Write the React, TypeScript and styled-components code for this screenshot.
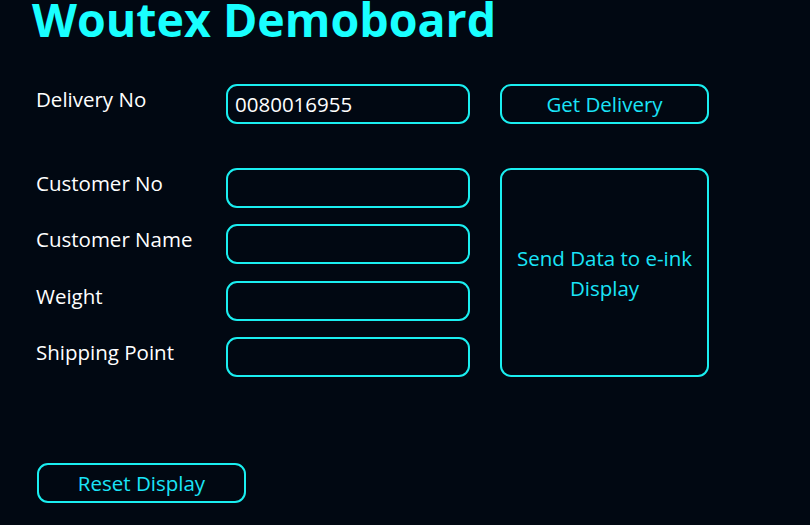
import React from 'react';
import styled, { createGlobalStyle } from 'styled-components';

const GlobalStyle = createGlobalStyle`
  html, body {
    margin: 0;
    padding: 0;
    background: #010812;
  }
  body {
    font-family: "Open Sans", "Noto Sans", sans-serif;
  }
`;

const Page = styled.div`
  width: 810px;
  height: 525px;
  background: #010812;
  padding: 0 0 0 36px;
  box-sizing: border-box;
  overflow: hidden;
`;

const Title = styled.h1`
  margin: 0 0 0 -4px;
  height: 84px;
  font-size: 46.5px;
  line-height: 38px;
  font-weight: 700;
  color: #19ffff;
  white-space: nowrap;
`;

const Form = styled.div`
  display: grid;
  grid-template-columns: 160px 244px 209px;
  column-gap: 30px;
`;

const Label = styled.div`
  color: #ffffff;
  font-size: 20.5px;
  line-height: 26px;
  padding-top: 2px;
  white-space: nowrap;
`;

const Field = styled.input`
  width: 244px;
  height: 40px;
  box-sizing: border-box;
  border: 2px solid #1aeef0;
  border-radius: 11px;
  background: transparent;
  color: #ffffff;
  font-family: inherit;
  font-size: 20.5px;
  padding: 0 7px;
  outline: none;
`;

const Button = styled.button<{ $tall?: boolean }>`
  width: 209px;
  height: ${p => (p.$tall ? '209px' : '40px')};
  box-sizing: border-box;
  border: 2px solid #1aeef0;
  border-radius: 11px;
  background: transparent;
  color: #1ae4f8;
  font-family: inherit;
  font-size: 20.5px;
  line-height: 30px;
  padding: 0 8px;
  cursor: pointer;
`;

const FirstRow = styled.div`
  display: contents;
`;

const Spacer = styled.div`
  grid-column: 1 / -1;
  height: 44px;
`;

const Stack = styled.div`
  grid-column: 1 / 3;
  display: grid;
  grid-template-columns: 160px 244px;
  column-gap: 30px;
  row-gap: 16px;
`;

const Footer = styled.div`
  padding-top: 86px;
  padding-left: 1px;
`;

export default function App() {
  const fields = ['Customer No', 'Customer Name', 'Weight', 'Shipping Point'];
  return (
    <>
      <GlobalStyle />
      <Page>
        <Title>Woutex Demoboard</Title>
        <Form>
          <FirstRow>
            <Label>Delivery No</Label>
            <Field defaultValue="0080016955" />
            <Button>Get Delivery</Button>
          </FirstRow>
          <Spacer />
          <Stack>
            {fields.map(f => (
              <React.Fragment key={f}>
                <Label>{f}</Label>
                <Field />
              </React.Fragment>
            ))}
          </Stack>
          <Button $tall>Send Data to e-ink Display</Button>
        </Form>
        <Footer>
          <Button>Reset Display</Button>
        </Footer>
      </Page>
    </>
  );
}
